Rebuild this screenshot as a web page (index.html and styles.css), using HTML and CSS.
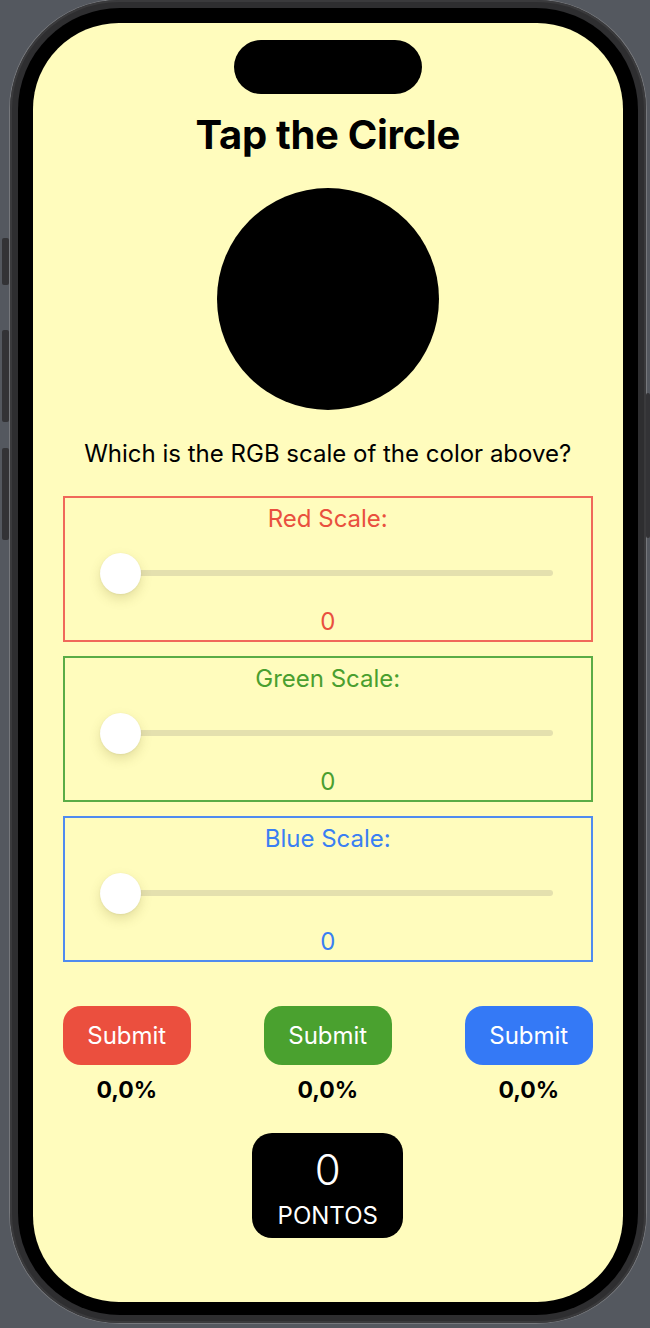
FILE: index.html
```html
<!DOCTYPE html>
<html lang="en">
<head>
<meta charset="utf-8">
<title>Tap the Circle</title>
<link rel="stylesheet" href="styles.css">
</head>
<body>
<div class="phone">
  <span class="side-btn btn-action"></span>
  <span class="side-btn btn-vol-up"></span>
  <span class="side-btn btn-vol-down"></span>
  <span class="side-btn btn-power"></span>
  <div class="bezel">
    <main class="screen">
      <div class="island"></div>
      <h1 class="title">Tap the Circle</h1>
      <div class="target"></div>
      <p class="question">Which is the RGB scale of the color above?</p>

      <section class="scale scale-red">
        <div class="scale-label">Red Scale:</div>
        <div class="slider"><div class="track"></div><div class="thumb"></div></div>
        <div class="scale-value">0</div>
      </section>
      <section class="scale scale-green">
        <div class="scale-label">Green Scale:</div>
        <div class="slider"><div class="track"></div><div class="thumb"></div></div>
        <div class="scale-value">0</div>
      </section>
      <section class="scale scale-blue">
        <div class="scale-label">Blue Scale:</div>
        <div class="slider"><div class="track"></div><div class="thumb"></div></div>
        <div class="scale-value">0</div>
      </section>

      <div class="submits">
        <div class="submit-col">
          <button class="submit submit-red">Submit</button>
          <div class="percent">0,0%</div>
        </div>
        <div class="submit-col">
          <button class="submit submit-green">Submit</button>
          <div class="percent">0,0%</div>
        </div>
        <div class="submit-col">
          <button class="submit submit-blue">Submit</button>
          <div class="percent">0,0%</div>
        </div>
      </div>

      <div class="score">
        <div class="score-num">0</div>
        <div class="score-label">PONTOS</div>
      </div>
    </main>
  </div>
</div>
</body>
</html>
```
FILE: styles.css
```css
* { box-sizing: border-box; }

html, body {
  margin: 0;
  padding: 0;
}

body {
  width: 650px;
  height: 1328px;
  overflow: hidden;
  background: #54585f;
  font-family: "Inter", "Noto Sans", "Liberation Sans", sans-serif;
}

.phone {
  position: relative;
  width: 636px;
  height: 1323px;
  margin-left: 10px;
  padding: 8px 8px 8px 8px;
  border-radius: 110px;
  background: #2e2e30;
  box-shadow: 0 0 0 1px #76787c, inset 0 0 0 2px #3a3a3c;
}

.side-btn {
  position: absolute;
  background: #333336;
  border-radius: 2px;
}
.btn-action { left: -8px; top: 238px; width: 7px; height: 47px; }
.btn-vol-up { left: -8px; top: 330px; width: 7px; height: 92px; }
.btn-vol-down { left: -8px; top: 448px; width: 7px; height: 92px; }
.btn-power { right: -4px; top: 393px; width: 4px; height: 145px; }

.bezel {
  height: 100%;
  padding: 15px 15px 13px 14.5px;
  border-radius: 102px;
  background: #000;
}

.screen {
  height: 100%;
  border-radius: 86px;
  background: #fffcbd;
  display: flex;
  flex-direction: column;
  align-items: center;
}

.island {
  width: 188px;
  height: 54px;
  margin-top: 17px;
  border-radius: 27px;
  background: #000;
}

.title {
  margin: 17px 0 0;
  font-size: 40px;
  line-height: 48px;
  font-weight: 700;
  color: #000;
  letter-spacing: -0.3px;
}

.target {
  width: 222px;
  height: 222px;
  margin-top: 29px;
  border-radius: 50%;
  background: #000;
}

.question {
  margin: 30px 0 0;
  font-size: 24px;
  line-height: 28px;
  color: #000;
}

.scale {
  width: 530px;
  height: 146px;
  margin-top: 14px;
  border: 2px solid;
  display: flex;
  flex-direction: column;
  align-items: center;
}
.scale-red { margin-top: 28px; border-color: #f0685a; color: #e9503e; }
.scale-green { border-color: #5aac46; color: #4a9f2f; }
.scale-blue { border-color: #4f8bf0; color: #3a7ff3; }

.scale-label {
  margin-top: 7px;
  font-size: 24px;
  line-height: 28px;
}

.slider {
  position: relative;
  align-self: stretch;
  height: 42px;
  margin: 19px 38px 0 35px;
  display: flex;
  align-items: center;
}

.track {
  flex: 1;
  height: 6px;
  border-radius: 3px;
  background: #e4e0ae;
}

.thumb {
  position: absolute;
  left: 0;
  top: 0.5px;
  width: 41px;
  height: 41px;
  border-radius: 50%;
  background: #fff;
  box-shadow: 0 5px 12px rgba(120, 110, 40, 0.2), 0 0.5px 2px rgba(0, 0, 0, 0.08);
}

.scale-value {
  margin-top: 14px;
  font-size: 24px;
  line-height: 28px;
}

.submits {
  width: 530px;
  margin-top: 44px;
  display: flex;
  justify-content: space-between;
}

.submit-col {
  width: 128px;
  display: flex;
  flex-direction: column;
  align-items: center;
}

.submit {
  width: 128px;
  height: 59px;
  border: none;
  border-radius: 18px;
  color: #fff;
  font-family: inherit;
  font-size: 24px;
  padding: 0;
}
.submit-red { background: #eb4f3e; }
.submit-green { background: #4aa12f; }
.submit-blue { background: #3479f6; }

.percent {
  margin-top: 11px;
  font-size: 23px;
  line-height: 28px;
  font-weight: 700;
  color: #000;
}

.score {
  width: 151px;
  height: 105px;
  margin-top: 29px;
  border-radius: 20px;
  background: #000;
  color: #fff;
  display: flex;
  flex-direction: column;
  align-items: center;
}

.score-num {
  margin-top: 12px;
  font-size: 42px;
  line-height: 50px;
  font-weight: 300;
}

.score-label {
  margin-top: 8px;
  font-size: 24px;
  line-height: 26px;
}
```
